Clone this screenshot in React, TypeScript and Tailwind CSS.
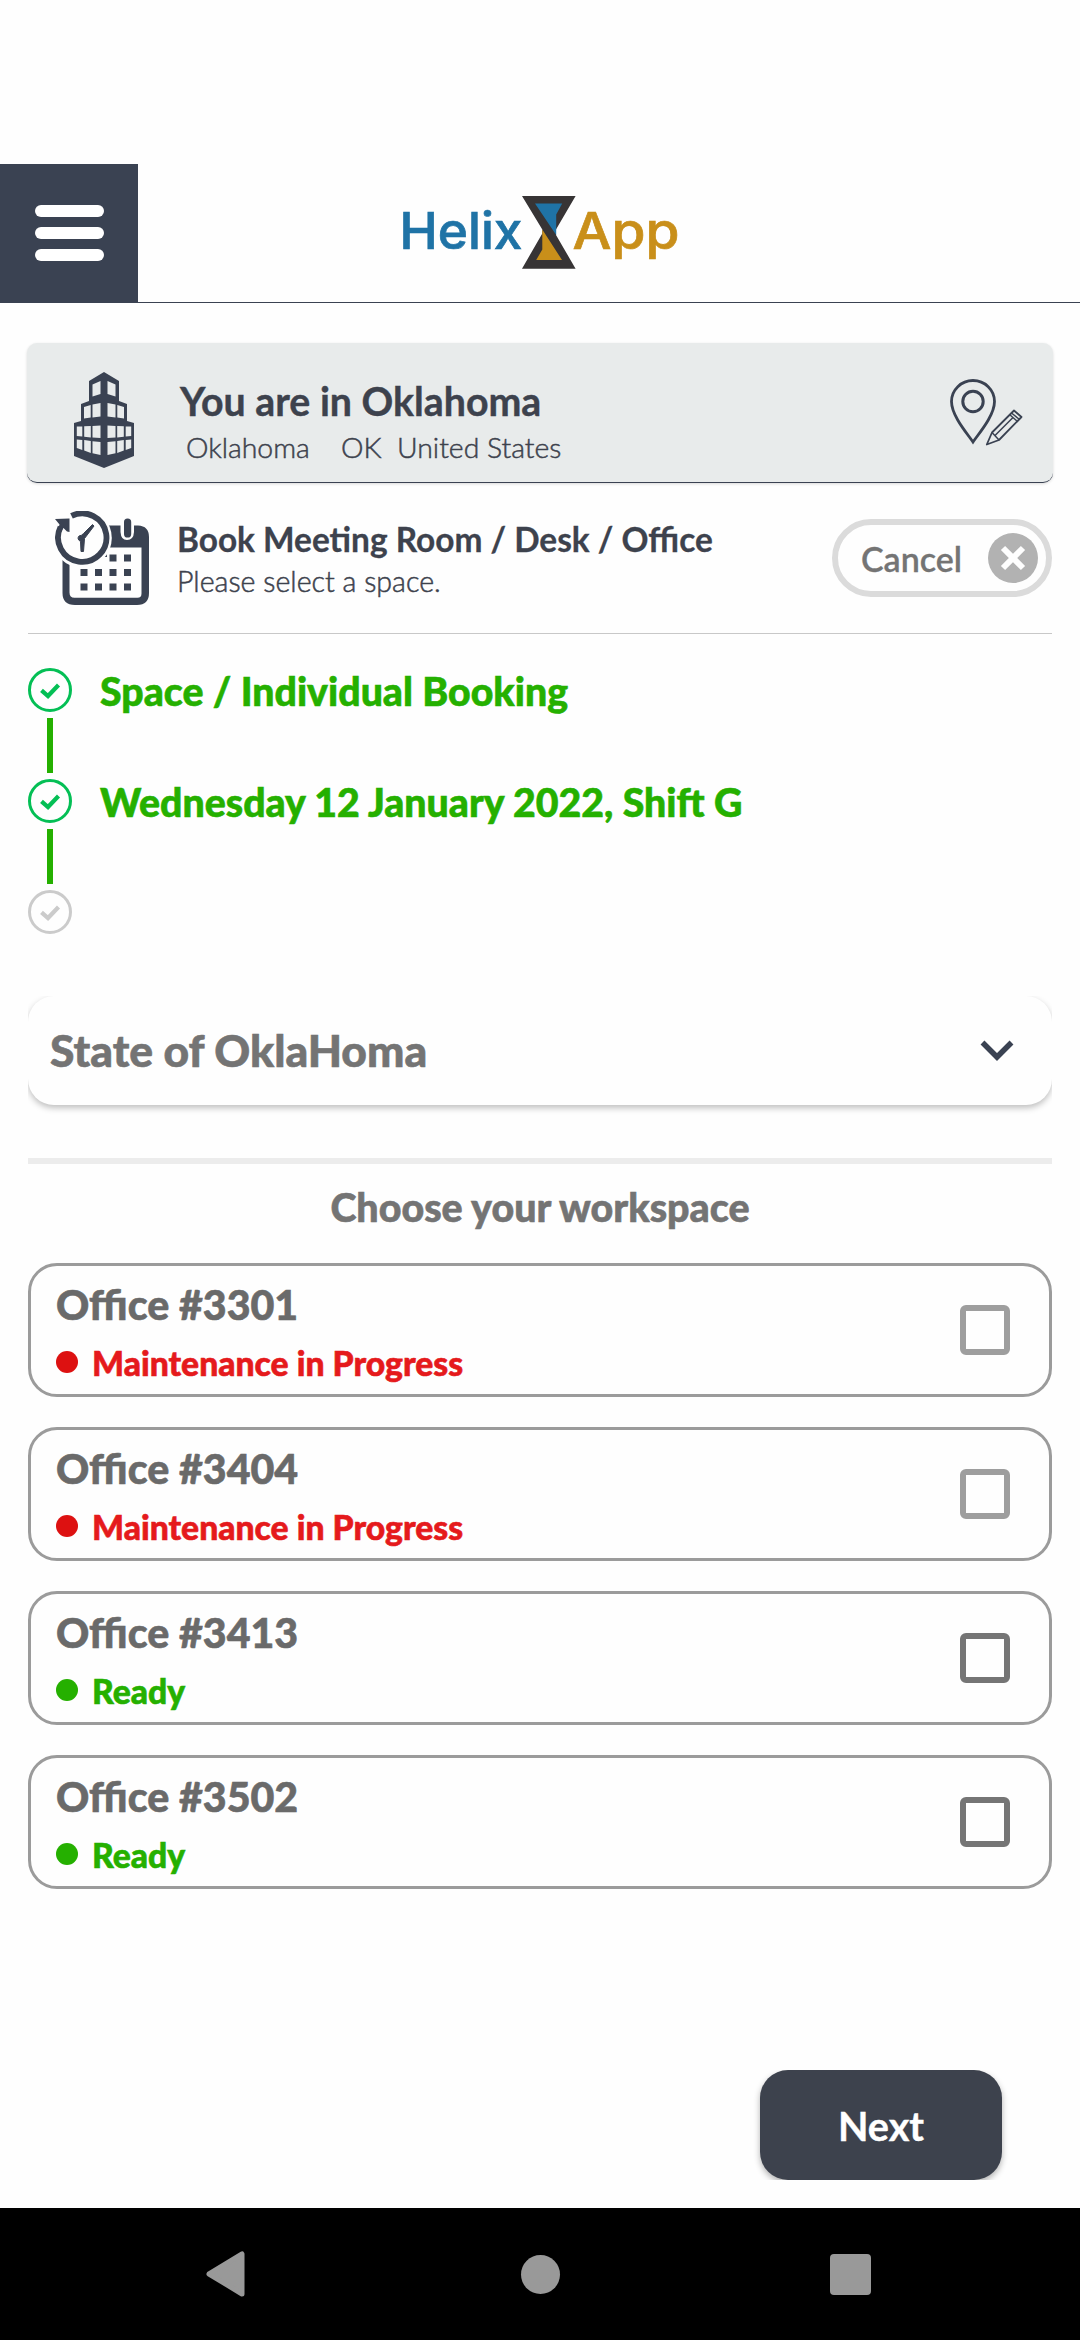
const spaces = [
  { name: 'Office #3301', ready: false },
  { name: 'Office #3404', ready: false },
  { name: 'Office #3413', ready: true },
  { name: 'Office #3502', ready: true },
];

function Logo() {
  return (
    <svg width="290" height="84" viewBox="0 0 290 84" className="block" fontFamily="Inter, sans-serif" fontWeight="500">
      <text x="-2.500" y="58.500" fontSize="51" fill="#1f73a6" stroke="#1f73a6" strokeWidth="0.700" textLength="123" lengthAdjust="spacingAndGlyphs">Helix</text>
      <path d="M120 6h53.600L154 39.500V45L173.600 78.700H120L140.300 43.500V39.500Z" fill="#373435" />
      <path d="M133 13.600h27.200L154.200 24.500V45Z" fill="#1f73a6" />
      <path d="M140.300 39.500L160 70H134.200L140.300 59.500Z" fill="#c98f1a" />
      <text x="170.500" y="58.500" fontSize="51" fill="#c98f1a" stroke="#c98f1a" strokeWidth="0.700" textLength="107" lengthAdjust="spacingAndGlyphs">App</text>
    </svg>
  );
}

function Building() {
  return (
    <svg width="60" height="96" viewBox="0 0 60 96" className="block">
      <path d="M30 0L15 9V29L7 32V49L0 51V84L30 96L60 84V51L53 49V32L45 29V9Z" fill="#3a4252" />
      <g fill="#e8ebeb">
        <path d="M18.500 12.500L26.500 9V22L18.500 24.500ZM41.500 12.500L33.500 9V22L41.500 24.500Z" />
        <path d="M10 35L16.700 33V45.500L10 46.500ZM18.500 32.500L26.500 31V44.500L18.500 45.500ZM50 35L43.300 33V45.500L50 46.500ZM41.500 32.500L33.500 31V44.500L41.500 45.500Z" />
        <path d="M2.800 54.500H8.300V64.500L2.800 64ZM10.200 54.300L16.800 54V65.500L10.200 64.700ZM18.500 54L26.500 53.500V66L18.500 65.500ZM57.200 54.500H51.700V64.500L57.200 64ZM49.800 54.300L43.200 54V65.500L49.800 64.700ZM41.500 54L33.500 53.500V66L41.500 65.500Z" />
        <path d="M2.800 67.500L8.300 68V78L2.800 76ZM10.200 68L16.800 69V81L10.200 78.500ZM18.500 69.200L26.500 70V83L18.500 81.300ZM57.200 67.500L51.700 68V78L57.200 76ZM49.800 68L43.200 69V81L49.800 78.500ZM41.500 69.200L33.500 70V83L41.500 81.300Z" />
      </g>
    </svg>
  );
}

function PinPencil() {
  return (
    <svg width="73" height="68" viewBox="0 0 73 68" className="block" fill="none" stroke="#3a4252">
      <path d="M23 63C18 55.500 1.500 37 1.500 22.500A21.500 21 0 0 1 44.500 22.500C44.500 37 28 55.500 23 63Z" strokeWidth="2.800" />
      <circle cx="23" cy="22.500" r="10.200" strokeWidth="3" />
      <path d="M36.800 65.500L42 53.500L64 31.500L71.500 38L49 61Z" strokeWidth="1.800" strokeLinejoin="round" />
      <path d="M42 53.500L49 61M59.500 35.500L67.500 42.500M45 56.500L63 38.500M61.500 34L69.500 40.500" strokeWidth="1.500" />
    </svg>
  );
}

function CalendarClock() {
  return (
    <svg width="94" height="94" viewBox="0 0 94 94" className="block">
      <path
        fillRule="evenodd"
        d="M7.500 46V82Q7.500 94 20 94H82Q94 94 94 82V26Q94 15 83 14.500H79V21Q78.500 29 72 29Q66 29 65.500 21V14.500H52V46ZM14.500 36.500H86.500V82.500Q86.500 86.800 82.500 86.800H19.500Q14.500 86.800 14.500 81.500Z"
        fill="#3a4252"
      />
      <rect x="69" y="7.500" width="7.200" height="19" rx="3.600" fill="#3a4252" />
      <circle cx="27" cy="27" r="29.800" fill="#fefefe" />
      <path d="M16.500 4.900A24.200 24.200 0 1 1 5.500 16" fill="none" stroke="#3a4252" strokeWidth="5.800" />
      <path d="M0 8L14.500 7.500V21L12 20.500L8.500 17L5 22L2.500 20L4.500 13.500Z" fill="#3a4252" />
      <path d="M37.500 13.500L39 15L29.500 27.500L28.500 40.500H26L25.500 30.500Q21.500 28 24 25Q27 24.500 28.500 22.500Z" fill="#3a4252" stroke="#3a4252" strokeLinejoin="round" />
      <path
        d="M54.500 43.500h7v7h-7zM69 43.500h7v7h-7zM25.500 58h7v7h-7zM40 58h7v7h-7zM54.500 58h7v7h-7zM69 58h7v7h-7zM25.500 72.500h7v7h-7zM40 72.500h7v7h-7zM54.500 72.500h7v7h-7zM69 72.500h7v7h-7z"
        fill="#3a4252"
      />
    </svg>
  );
}

function StepMark({ done }: { done: boolean }) {
  return (
    <svg width="44" height="44" viewBox="0 0 44 44" fill="none" className={done ? 'block text-[#04bf55]' : 'block text-[#cbcbcb]'} stroke="currentColor">
      <circle cx="22" cy="22" r="20.500" strokeWidth="3" />
      <path d="M13.500 22.300L20 28L30.500 17" strokeWidth="4.200" />
    </svg>
  );
}

export default function App() {
  return (
    <div className="flex h-[2340px] w-[1080px] flex-col overflow-hidden bg-[#fefefe] font-[Lato,sans-serif]">
      <header className="mt-[164px] flex h-[139px] border-b border-[#3a4252]">
        <button className="flex w-[138px] flex-col items-center justify-center gap-[10.500px] bg-[#3a4252]">
          <span className="h-[11.500px] w-[69px] rounded-full bg-white" />
          <span className="h-[11.500px] w-[69px] rounded-full bg-white" />
          <span className="h-[11.500px] w-[69px] rounded-full bg-white" />
        </button>
        <div className="mt-[26px] ml-[264px] [&>svg]:overflow-visible"><Logo /></div>
      </header>

      <section className="mt-[40px] ml-[27px] flex h-[140px] w-[1026px] rounded-[10px] border-b border-[#3a4252] bg-[#e8ebeb] shadow-[0_1px_3px_rgba(0,0,0,0.15)]">
        <div className="mt-[29px] ml-[47px]"><Building /></div>
        <div className="ml-[46px] w-[700px] text-[#3d424d]">
          <h1 className="mt-[38px] text-[39.300px] leading-none font-bold [-webkit-text-stroke:0.400px]">You are in Oklahoma</h1>
          <div className="mt-[13px] ml-[6px] flex text-[28.400px] leading-none font-light [-webkit-text-stroke:0.500px]">
            <span className="w-[155px]">Oklahoma</span>
            <span className="w-[56px]">OK</span>
            <span>United States</span>
          </div>
        </div>
        <div className="mt-[36px] ml-[70px]"><PinPencil /></div>
      </section>

      <section className="mx-[28px] flex h-[151px] border-b border-[#c8c8c8]">
        <div className="mt-[28px] ml-[27px]"><CalendarClock /></div>
        <div className="ml-[28px] w-[655px] text-[#3d424d]">
          <h2 className="mt-[40px] text-[33.400px] leading-none font-bold [-webkit-text-stroke:0.300px]">Book Meeting Room / Desk / Office</h2>
          <p className="mt-[11px] text-[28.600px] leading-none font-light [-webkit-text-stroke:0.500px]">Please select a space.</p>
        </div>
        <button className="mt-[36px] flex h-[78px] w-[220px] items-center rounded-full border-6 border-[#dbdbdb] text-[34px] font-semibold text-[#747474]">
          <span className="mt-[2px] ml-[23px] w-[127px] text-left leading-none [-webkit-text-stroke:0.300px]">Cancel</span>
          <svg width="50" height="50" viewBox="0 0 50 50">
            <circle cx="25" cy="25" r="25" fill="#b2b2b2" />
            <path d="M15 15L35 35M35 15L15 35" stroke="#fefefe" strokeWidth="6" />
          </svg>
        </button>
      </section>

      <section className="mt-[34px] ml-[28px] flex h-[266px] gap-[28px]">
        <div className="flex flex-col items-center">
          <StepMark done />
          <span className="my-[6px] h-[55px] w-[6px] bg-[#25b000]" />
          <StepMark done />
          <span className="my-[6px] h-[55px] w-[6px] bg-[#25b000]" />
          <StepMark done={false} />
        </div>
        <div className="pt-[3px] text-[39.250px] leading-[40px] font-black text-[#25b000] [-webkit-text-stroke:0.600px]">
          <p>Space / Individual Booking</p>
          <p className="mt-[71px]">Wednesday 12 January 2022, Shift G</p>
        </div>
      </section>

      <div className="mx-[28px] mt-[62px] h-[124px] overflow-hidden">
        <button className="flex h-[109px] w-full items-center rounded-[26px] bg-[#fefefe] shadow-[0_3px_6px_rgba(0,0,0,0.25)]">
          <span className="ml-[22px] flex-1 text-left text-[44.400px] leading-none font-black text-[#747474] [-webkit-text-stroke:0.600px]">State of OklaHoma</span>
          <svg width="34" height="22" viewBox="0 0 34 22" className="mr-[38px]">
            <path d="M2.500 2.500L17 17L31.500 2.500" fill="none" stroke="#3a4252" strokeWidth="5.500" />
          </svg>
        </button>
      </div>

      <main className="mx-[28px] mt-[38px] border-t-6 border-[#ececec]">
        <h3 className="mt-[23px] mb-[36px] text-center text-[39.400px] leading-[40px] font-black text-[#747474] [-webkit-text-stroke:0.600px]">Choose your workspace</h3>
        <ul className="flex flex-col gap-[30px]">
          {spaces.map((s) => (
            <li key={s.name} className="flex h-[134px] items-center rounded-[29px] border-3 border-[#9b9b9b]">
              <div className="mt-[16px] ml-[25px] flex-1 self-start [-webkit-text-stroke:0.600px]">
                <p className="text-[41.100px] leading-[44px] font-black text-[#6a6a6a]">{s.name}</p>
                <div className={s.ready ? 'mt-[18px] flex items-center text-[#25b000]' : 'mt-[18px] flex items-center text-[#e51a1c]'}>
                  <span className={s.ready ? 'mb-[1px] size-[22px] rounded-full bg-[#25b000]' : 'mb-[1px] size-[22px] rounded-full bg-[#dd1111]'} />
                  <span className="ml-[14px] pt-[1px] text-[33.700px] leading-[36px] font-black">{s.ready ? 'Ready' : 'Maintenance in Progress'}</span>
                </div>
              </div>
              <span className={s.ready ? 'mr-[39px] size-[50px] rounded-[6px] border-6 border-[#757575]' : 'mr-[39px] size-[50px] rounded-[6px] border-6 border-[#9e9e9e]'} />
            </li>
          ))}
        </ul>
      </main>

      <div className="mt-[181px] ml-[740px] h-[110px] w-[280px] overflow-hidden px-[20px]">
        <button className="h-[110px] w-[242px] rounded-[28px] bg-[#3d424d] pt-[2px] text-[39.600px] leading-none font-bold text-white shadow-[0_3px_6px_rgba(0,0,0,0.3)] [-webkit-text-stroke:0.400px]">Next</button>
      </div>

      <nav className="mt-auto flex h-[132px] items-center bg-black">
        <svg width="40" height="46" viewBox="0 0 40 46" className="ml-[206px]">
          <path d="M3 23L36 3V43Z" fill="#999" stroke="#999" strokeWidth="5" strokeLinejoin="round" />
        </svg>
        <span className="ml-[275px] size-[39px] rounded-full bg-[#999]" />
        <span className="ml-[270px] size-[41px] rounded-[4px] bg-[#999]" />
      </nav>
    </div>
  );
}
